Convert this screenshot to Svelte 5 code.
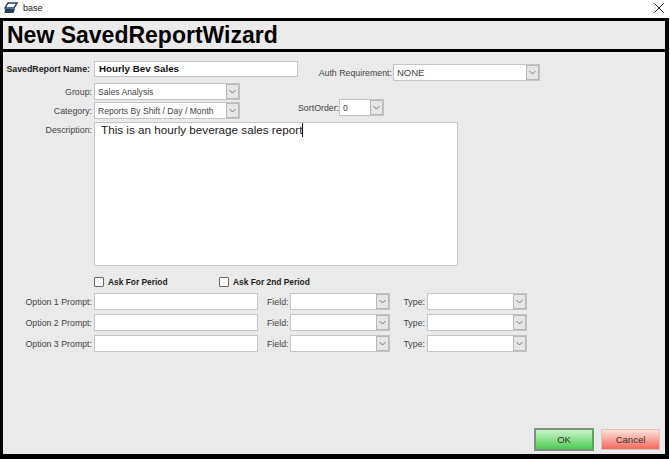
<script>
    const options = [1, 2, 3]
</script>

{#snippet arrow()}
    <i class="arrow"><svg width="7" height="5" viewBox="0 0 7 5"><path d="M0.5 1 L3.5 4 L6.5 1" /></svg></i>
{/snippet}

<div class="window">
    <div class="titlebar">
        <svg class="app-icon" width="14" height="12" viewBox="0 0 14 12">
            <path d="M4 1 H13 L10 6 H1 Z" fill="#fff" stroke="#1f3f66" stroke-width="1.4" />
            <path d="M1 7 H11 L9.5 11 H0.5 Z" fill="#1f3f66" />
        </svg>
        <span class="title">base</span>
        <svg class="close" width="10" height="10" viewBox="0 0 10 10">
            <path d="M0.5 0.5 L9.5 9.5 M9.5 0.5 L0.5 9.5" stroke="#222" stroke-width="1" fill="none" />
        </svg>
    </div>

    <div class="frame">
        <header class="header">
            <h1>New SavedReportWizard</h1>
        </header>

        <main class="body">
            <div class="top">
                <div class="left">
                    <div class="row">
                        <span class="label strong">SavedReport Name:</span>
                        <div class="input name">Hourly Bev Sales</div>
                    </div>
                    <div class="row group">
                        <span class="label">Group:</span>
                        <div class="select wide"><span>Sales Analysis</span>{@render arrow()}</div>
                    </div>
                    <div class="row category">
                        <span class="label">Category:</span>
                        <div class="select wide"><span>Reports By Shift / Day / Month</span>{@render arrow()}</div>
                    </div>
                </div>
                <div class="right">
                    <div class="row auth">
                        <span class="label auth-label">Auth Requirement:</span>
                        <div class="select auth-select"><span>NONE</span>{@render arrow()}</div>
                    </div>
                    <div class="row sort">
                        <span class="label sort-label">SortOrder:</span>
                        <div class="select sort-select"><span>0</span>{@render arrow()}</div>
                    </div>
                </div>
            </div>

            <div class="row description">
                <span class="label">Description:</span>
                <div class="textarea">This is an hourly beverage sales report<b class="caret"></b></div>
            </div>

            <div class="checks">
                <label class="check first"><input type="checkbox" />Ask For Period</label>
                <label class="check"><input type="checkbox" />Ask For 2nd Period</label>
            </div>

            <div class="options">
                {#each options as n}
                    <div class="row option">
                        <span class="label">Option {n} Prompt:</span>
                        <div class="input prompt"></div>
                        <span class="label field-label">Field:</span>
                        <div class="select small">{@render arrow()}</div>
                        <span class="label type-label">Type:</span>
                        <div class="select small">{@render arrow()}</div>
                    </div>
                {/each}
            </div>

            <div class="footer">
                <button class="ok">OK</button>
                <button class="cancel">Cancel</button>
            </div>
        </main>
    </div>
</div>

<style>
:global(body) {
    margin: 0;
    background: #fff;
}

.window {
    width: 670px;
    height: 459px;
    display: flex;
    flex-direction: column;
    font-family: "Liberation Sans", Arial, sans-serif;
    font-size: 8.8px;
    color: #444;
    overflow: hidden;
}

.titlebar {
    height: 18px;
    flex: none;
    display: flex;
    align-items: center;
    padding: 0 6px 2px 4px;
    box-sizing: border-box;
}

.app-icon {
    margin-right: 5px;
}

.title {
    font-size: 9px;
    color: #222;
}

.close {
    margin-left: auto;
}

.frame {
    width: 669px;
    height: 441px;
    flex: none;
    box-sizing: border-box;
    border: solid #000;
    border-width: 3px 4px 5px 3px;
    background: #eaeaea;
    display: flex;
    flex-direction: column;
}

.header {
    height: 28px;
    flex: none;
    display: flex;
    align-items: center;
    padding-left: 4px;
    border-bottom: 3px solid #000;
}

h1 {
    margin: 0;
    font-size: 23px;
    font-weight: 700;
    color: #000;
    line-height: 1;
}

.body {
    flex: 1;
    display: flex;
    flex-direction: column;
    padding: 9px 5px 3px 0;
    min-height: 0;
}

.top {
    display: flex;
}

.left {
    width: 295px;
    flex: none;
}

.row {
    display: flex;
    align-items: center;
}

.label {
    width: 89px;
    flex: none;
    text-align: right;
    margin-right: 2px;
    white-space: nowrap;
}

.label.strong {
    width: 87px;
    margin-right: 4px;
    font-weight: 700;
    color: #222;
    font-size: 8.8px;
}

.input,
.select,
.textarea {
    box-sizing: border-box;
    background: #fff;
    border: 1px solid #c4c4c4;
}

.input.name {
    width: 205px;
    height: 16px;
    font-size: 9.8px;
    font-weight: 700;
    color: #111;
    line-height: 14px;
    padding-left: 4px;
}

.select {
    height: 17px;
    display: flex;
    align-items: center;
    justify-content: space-between;
    padding-left: 3px;
    white-space: nowrap;
    font-size: 8.6px;
}

.select.wide {
    width: 146px;
}

.arrow {
    box-sizing: border-box;
    width: 13px;
    height: 15px;
    flex: none;
    display: flex;
    align-items: center;
    justify-content: center;
    background: #e6e6e6;
    border: 1px solid #b8b8b8;
}

.arrow svg path {
    stroke: #777;
    fill: none;
    stroke-width: 1;
}

.group {
    margin-top: 6px;
}

.category {
    margin-top: 2px;
}

.right {
    flex: 1;
}

.auth {
    margin-top: 3px;
}

.auth-label {
    width: 94px;
    margin-right: 1px;
}

.auth-select {
    width: 147px;
    font-size: 9.5px;
}

.sort {
    margin-top: 18px;
}

.sort-label {
    width: 39px;
    margin-right: 2px;
}

.sort-select {
    width: 45px;
}

.description {
    align-items: flex-start;
    margin-top: 3px;
}

.description .label {
    padding-top: 3px;
}

.textarea {
    width: 364px;
    height: 144px;
    padding: 0 6px;
    font-size: 11.7px;
    color: #222;
}

.caret {
    display: inline-block;
    width: 1px;
    height: 14px;
    background: #111;
    vertical-align: -3px;
}

.checks {
    display: flex;
    margin: 9px 0 0 91px;
    height: 13px;
}

.check {
    display: flex;
    align-items: center;
    font-weight: 700;
    font-size: 8.4px;
    color: #222;
}

.check.first {
    width: 125px;
}

.check input {
    appearance: none;
    box-sizing: border-box;
    width: 10px;
    height: 10px;
    margin: 0 4px 0 0;
    background: #fff;
    border: 1px solid #666;
    border-radius: 1px;
}

.options {
    margin-top: 5px;
}

.option {
    height: 17px;
    margin-bottom: 4px;
}

.input.prompt {
    width: 164px;
    height: 17px;
}

.field-label {
    width: 21px;
    margin: 0 2px 0 9px;
}

.type-label {
    width: 22px;
    margin: 0 2px 0 13px;
}

.select.small {
    width: 100px;
    justify-content: flex-end;
}

.footer {
    margin-top: auto;
    display: flex;
    justify-content: flex-end;
    align-items: center;
    gap: 7px;
}

button {
    font-family: inherit;
    font-size: 9.5px;
    color: #333;
    padding: 0;
    box-sizing: border-box;
}

.ok {
    width: 60px;
    height: 23px;
    background: linear-gradient(#c8f5c8, #4fca55);
    border: 2px solid #7f8f80;
    border-right-color: #5aa860;
}

.cancel {
    width: 59px;
    height: 21px;
    background: linear-gradient(#fde0da, #f4695c);
    border: 1px solid #d9c4c0;
}
</style>
